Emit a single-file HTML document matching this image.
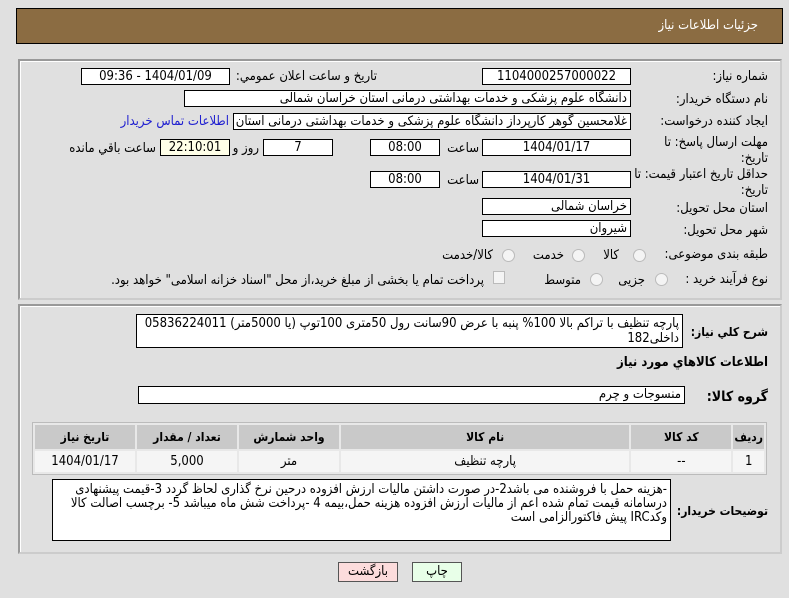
<!DOCTYPE html>
<html><head><meta charset="utf-8">
<style>
body{margin:0;width:789px;height:598px;background:#e0e0e0;font-family:"DejaVu Sans Condensed","DejaVu Sans",sans-serif;font-size:12px;color:#000;position:relative;overflow:hidden;direction:rtl}
.a{position:absolute}
.hdr{left:16px;top:8px;width:765px;height:34px;background:#8b6c42;border:1px solid #000}
.hdr span{position:absolute;right:24px;top:9px;color:#fff;font-size:13px}
.panel{left:18px;top:59px;width:760px;border:2px solid #999;border-right-color:#ccc;border-bottom-color:#ccc;box-shadow:inset 1px 1px 0 #fff}
.box{position:absolute;background:#fff;border:1px solid #000;height:17px;line-height:16px;box-sizing:border-box;padding:0 3px;white-space:nowrap;overflow:hidden}
.c{text-align:center;font-size:13px}
.l{position:absolute;white-space:nowrap;font-size:13px}
.rad{position:absolute;width:11px;height:11px;border-radius:50%;border:1px solid #bbb;background:#f4f4f4}
table{border-collapse:separate;border-spacing:2px;background:#e8e8e8;border:1px solid #bbb}
th{background:#c9c9c9;height:22px;font-weight:bold;font-size:12px}
td{background:#f5f5f5;height:19px;text-align:center;font-size:13px}
.btn{position:absolute;height:18px;border:1px solid #555;text-align:center;line-height:18px;font-size:13px}
</style></head><body>
<div class="a hdr"><span>جزئیات اطلاعات نیاز</span></div>
<div class="a panel" style="height:237px"></div>
<div class="a panel" style="top:304px;height:246px"></div>

<div class="l" style="right:21px;top:69px">شماره نیاز:</div>
<div class="box c" style="left:482px;top:68px;width:149px">1104000257000022</div>
<div class="l" style="right:412px;top:69px">تاریخ و ساعت اعلان عمومي:</div>
<div class="box c" style="left:81px;top:68px;width:149px">1404/01/09 - 09:36</div>

<div class="l" style="right:21px;top:92px">نام دستگاه خریدار:</div>
<div class="box" style="left:184px;top:90px;width:447px;font-size:13px">دانشگاه علوم پزشکی و خدمات بهداشتی درمانی استان خراسان شمالی</div>

<div class="l" style="right:21px;top:114px">ایجاد کننده درخواست:</div>
<div class="box" style="left:233px;top:113px;width:398px;font-size:13px">غلامحسین گوهر کارپرداز  دانشگاه علوم پزشکی و خدمات بهداشتی درمانی استان</div>
<div class="l" style="right:560px;top:114px;color:#2020d0">اطلاعات تماس خریدار</div>

<div class="l" style="right:21px;top:135px">مهلت ارسال پاسخ: تا</div>
<div class="l" style="right:21px;top:151px">تاریخ:</div>
<div class="box c" style="left:482px;top:139px;width:149px">1404/01/17</div>
<div class="l" style="right:310px;top:141px">ساعت</div>
<div class="box c" style="left:370px;top:139px;width:70px">08:00</div>
<div class="box c" style="left:263px;top:139px;width:70px">7</div>
<div class="l" style="right:530px;top:141px">روز و</div>
<div class="box c" style="left:160px;top:139px;width:70px;background:#ffffe8">22:10:01</div>
<div class="l" style="right:633px;top:141px">ساعت باقي مانده</div>

<div class="l" style="right:21px;top:167px">حداقل تاریخ اعتبار قیمت: تا</div>
<div class="l" style="right:21px;top:183px">تاریخ:</div>
<div class="box c" style="left:482px;top:171px;width:149px">1404/01/31</div>
<div class="l" style="right:310px;top:173px">ساعت</div>
<div class="box c" style="left:370px;top:171px;width:70px">08:00</div>

<div class="l" style="right:21px;top:201px">استان محل تحویل:</div>
<div class="box" style="left:482px;top:198px;width:149px;font-size:13px">خراسان شمالی</div>
<div class="l" style="right:21px;top:223px">شهر محل تحویل:</div>
<div class="box" style="left:482px;top:220px;width:149px;font-size:13px">شیروان</div>

<div class="l" style="right:21px;top:247px">طبقه بندی موضوعی:</div>
<div class="rad" style="left:633px;top:249px"></div><div class="l" style="right:170px;top:248px">کالا</div>
<div class="rad" style="left:572px;top:249px"></div><div class="l" style="right:225px;top:248px">خدمت</div>
<div class="rad" style="left:502px;top:249px"></div><div class="l" style="right:296px;top:248px">کالا/خدمت</div>

<div class="l" style="right:21px;top:272px">نوع فرآیند خرید :</div>
<div class="rad" style="left:655px;top:273px"></div><div class="l" style="right:144px;top:273px">جزیی</div>
<div class="rad" style="left:590px;top:273px"></div><div class="l" style="right:208px;top:273px">متوسط</div>
<div class="a" style="left:493px;top:271px;width:10px;height:11px;border:1px solid #bbb;background:#f4f4f4"></div>
<div class="l" style="right:305px;top:273px">پرداخت تمام یا بخشی از مبلغ خرید،از محل "اسناد خزانه اسلامی" خواهد بود.</div>

<div class="l" style="right:21px;top:325px;font-weight:bold;font-size:12px">شرح کلي نیاز:</div>
<div class="box" style="left:136px;top:314px;width:547px;height:34px;line-height:15px;white-space:normal;padding-top:1px;font-size:13px">پارچه تنظیف با تراکم بالا  100% پنبه با عرض 90سانت رول 50متری 100توپ (یا 5000متر)   05836224011 داخلی182</div>
<div class="l" style="right:21px;top:355px;font-weight:bold;font-size:13px">اطلاعات کالاهاي مورد نیاز</div>
<div class="l" style="right:21px;top:389px;font-weight:bold;font-size:14px">گروه کالا:</div>
<div class="box" style="left:138px;top:386px;width:547px;height:18px;font-size:13px">منسوجات و چرم</div>

<table class="a" style="left:32px;top:422px;width:735px">
<tr><th style="width:24px">ردیف</th><th style="width:98px">کد کالا</th><th>نام کالا</th><th style="width:98px">واحد شمارش</th><th style="width:98px">تعداد / مقدار</th><th style="width:98px">تاریخ نیاز</th></tr>
<tr><td>1</td><td>--</td><td>پارچه تنظیف</td><td>متر</td><td>5,000</td><td>1404/01/17</td></tr>
</table>

<div class="l" style="right:21px;top:504px;font-weight:bold;font-size:12px">توضیحات خریدار:</div>
<div class="box" style="left:52px;top:479px;width:619px;height:62px;line-height:14px;white-space:normal;padding-top:3px;font-size:13px">-هزینه حمل با فروشنده می باشد2-در صورت داشتن مالیات ارزش افزوده درحین نرخ گذاری لحاظ گردد 3-قیمت پیشنهادی درسامانه  قیمت تمام شده اعم از مالیات ارزش افزوده هزینه حمل،بیمه  4 -پرداخت شش ماه میباشد 5- برچسب اصالت کالا وکدIRC پیش فاکتورالزامی است</div>

<div class="btn" style="left:338px;top:562px;width:58px;background:#fcdcdc">بازگشت</div>
<div class="btn" style="left:412px;top:562px;width:48px;background:#e8ffe8">چاپ</div>
</body></html>
